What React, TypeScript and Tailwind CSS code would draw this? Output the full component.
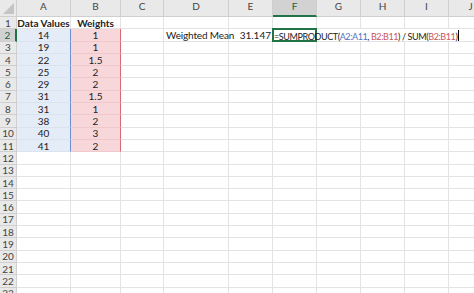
const COLS = ["A", "B", "C", "D", "E", "F", "G", "H", "I", "J"];
const VALUES = ["14", "19", "22", "25", "29", "31", "31", "38", "40", "41"];
const WEIGHTS = ["1", "1", "1.5", "2", "2", "1.5", "1", "2", "3", "2"];
const ROW_COUNT = 23;

const font = { fontFamily: "Lato, 'Open Sans', sans-serif" };

function cellContent(row: number, col: number) {
  if (row === 1 && col === 0) return <span className="font-bold">Data Values</span>;
  if (row === 1 && col === 1) return <span className="font-bold">Weights</span>;
  if (row >= 2 && row <= 11 && col === 0) return VALUES[row - 2];
  if (row >= 2 && row <= 11 && col === 1) return WEIGHTS[row - 2];
  if (row === 2 && col === 3) return <span className="tracking-[-0.15px]">Weighted Mean</span>;
  if (row === 2 && col === 4) return "31.147";
  return null;
}

function Formula() {
  return (
    <span className="absolute left-[1px] top-0 z-10 whitespace-nowrap text-[9px] leading-[12px] tracking-[-0.4px] text-[#222]">
      =SUMPRODUCT(<span className="text-[#4a73c2]">A2:A11</span>,{" "}
      <span className="text-[#c9545c]">B2:B11</span>) / SUM(
      <span className="text-[#c9545c]">B2:B11</span>)
      <span className="ml-[1px] inline-block h-[11px] w-px translate-y-[1px] bg-black" />
    </span>
  );
}

export default function App() {
  return (
    <div className="h-[293px] w-[474px] overflow-hidden bg-white text-[10px] text-[#222]" style={font}>
      <div className="relative grid grid-cols-[17px_54px_50px_43px_65px_44px_44px_44px_44px_44px_44px] grid-rows-[17px_repeat(23,12.3px)]">
        {/* header row */}
        <div className="relative border-b border-r border-[#cfcfcf] bg-[#e9e9e9]">
          <svg className="absolute bottom-[2px] right-[2px]" width="11" height="11" viewBox="0 0 11 11">
            <polygon points="11,0 11,11 0,11" fill="#c4c4c4" />
          </svg>
        </div>
        {COLS.map((c) => (
          <div
            key={c}
            className={
              c === "F"
                ? "flex items-end justify-center border-b-2 border-r border-b-[#217346] border-r-[#cfcfcf] bg-[#d2d2d2] pb-[1px] text-[#1f5f3d]"
                : "flex items-end justify-center border-b border-r border-[#cfcfcf] bg-[#e9e9e9] pb-[2px] text-[#444]"
            }
          >
            {c}
          </div>
        ))}

        {Array.from({ length: ROW_COUNT }, (_, i) => i + 1).map((row) => [
          <div
            key={`h${row}`}
            className={
              row === 2
                ? "flex items-center justify-center border-b border-r-2 border-b-[#cfcfcf] border-r-[#217346] bg-[#d2d2d2] leading-none text-[#1f5f3d]"
                : "flex items-center justify-center border-b border-r border-[#cfcfcf] bg-[#e9e9e9] leading-none text-[#444]"
            }
          >
            {row}
          </div>,
          ...COLS.map((_, col) => {
            const inA = col === 0 && row >= 2 && row <= 11;
            const inB = col === 1 && row >= 2 && row <= 11;
            const hideRight = row === 2 && col >= 5 && col <= 8;
            let cls = "relative flex items-center overflow-visible whitespace-nowrap border-b leading-none ";
            cls += hideRight ? "" : "border-r ";
            cls += "border-[#e3e3e3] ";
            if (inA) cls += "justify-center bg-[#e4ecf8] border-b-[#dbe3ef] border-r-[#6f8fd0] ";
            else if (inB) cls += "justify-center bg-[#f7d7da] border-b-[#efc9cc] border-r-[#d86a72] ";
            else if (col === 4) cls += "justify-end pr-[1px] ";
            else if (row === 1) cls += "justify-center ";
            else cls += "pl-[2px] ";
            if ((inA || inB) && row === 11) cls += col === 0 ? "border-b-[#6f8fd0] " : "border-b-[#d86a72] ";
            if (row === 2 && col === 5) {
              return (
                <div key={`${row}-${col}`} className="relative border-b border-[#e3e3e3]">
                  <div className="absolute -left-[1px] -top-[1px] h-[13.3px] w-[45px] border-2 border-[#217346]" />
                  <Formula />
                </div>
              );
            }
            return (
              <div key={`${row}-${col}`} className={cls}>
                {cellContent(row, col)}
              </div>
            );
          }),
        ])}
      </div>
    </div>
  );
}
